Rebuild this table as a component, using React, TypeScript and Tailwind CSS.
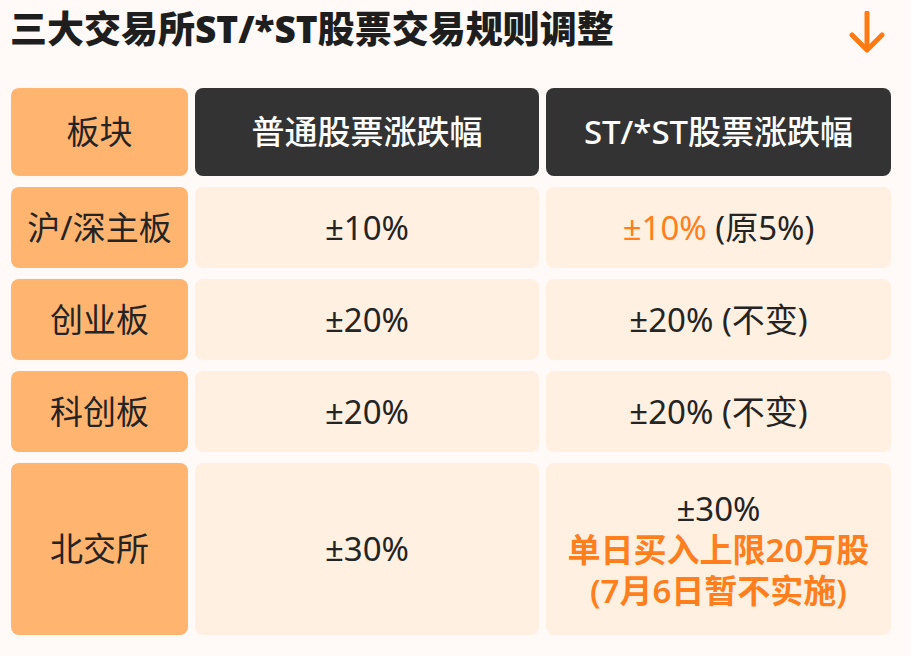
import React from "react";

const font = { fontFamily: '"Noto Sans", "Noto Sans CJK SC", sans-serif' };

type Row = { name: string; normal: string; st: React.ReactNode; tall?: boolean };

const rows: Row[] = [
  {
    name: "沪/深主板",
    normal: "±10%",
    st: (
      <span>
        <span className="text-[#ff7f1e]">±10%</span> (原5%)
      </span>
    ),
  },
  { name: "创业板", normal: "±20%", st: "±20% (不变)" },
  { name: "科创板", normal: "±20%", st: "±20% (不变)" },
  {
    name: "北交所",
    normal: "±30%",
    tall: true,
    st: (
      <div className="flex flex-col items-center leading-[41px]">
        <span>±30%</span>
        <span className="font-semibold text-[#ff7f1e]">单日买入上限20万股</span>
        <span className="font-semibold text-[#ff7f1e]">(7月6日暂不实施)</span>
      </div>
    ),
  },
];

function DownArrow() {
  return (
    <svg width="40" height="42" viewBox="0 0 40 42" fill="none">
      <path d="M20 2 V38" stroke="#ff7a12" strokeWidth="5" strokeLinecap="round" />
      <path d="M5 24 L20 39 L35 24" stroke="#ff7a12" strokeWidth="5" strokeLinecap="round" strokeLinejoin="round" />
    </svg>
  );
}

export default function App() {
  return (
    <div style={font} className="w-[911px] h-[656px] bg-[#fffaf7] overflow-hidden">
      <div className="flex items-start justify-between pl-[10px] pr-[24px] pt-[5px]">
        <h1 className="text-[37px] font-black leading-[48px] text-[#1e1e1e]">
          三大交易所ST/*ST股票交易规则调整
        </h1>
        <div className="pt-[6px]">
          <DownArrow />
        </div>
      </div>

      <div className="mt-[35px] ml-[11px] grid grid-cols-[177px_344px_345px] gap-x-[7px] gap-y-[11px] text-[33px] text-[#242424]">
        <div className="h-[88px] rounded-[8px] bg-[#ffb470] flex items-center justify-center">板块</div>
        <div className="h-[88px] rounded-[8px] bg-[#333333] text-white font-medium flex items-center justify-center">
          普通股票涨跌幅
        </div>
        <div className="h-[88px] rounded-[8px] bg-[#333333] text-white font-medium flex items-center justify-center">
          ST/*ST股票涨跌幅
        </div>

        {rows.map((r) => (
          <React.Fragment key={r.name}>
            <div
              className={`${r.tall ? "h-[172px]" : "h-[81px]"} rounded-[8px] bg-[#ffb470] flex items-center justify-center`}
            >
              {r.name}
            </div>
            <div
              className={`${r.tall ? "h-[172px]" : "h-[81px]"} rounded-[8px] bg-[#fff0e2] flex items-center justify-center`}
            >
              {r.normal}
            </div>
            <div
              className={`${r.tall ? "h-[172px]" : "h-[81px]"} rounded-[8px] bg-[#fff0e2] flex items-center justify-center`}
            >
              {r.st}
            </div>
          </React.Fragment>
        ))}
      </div>
    </div>
  );
}
